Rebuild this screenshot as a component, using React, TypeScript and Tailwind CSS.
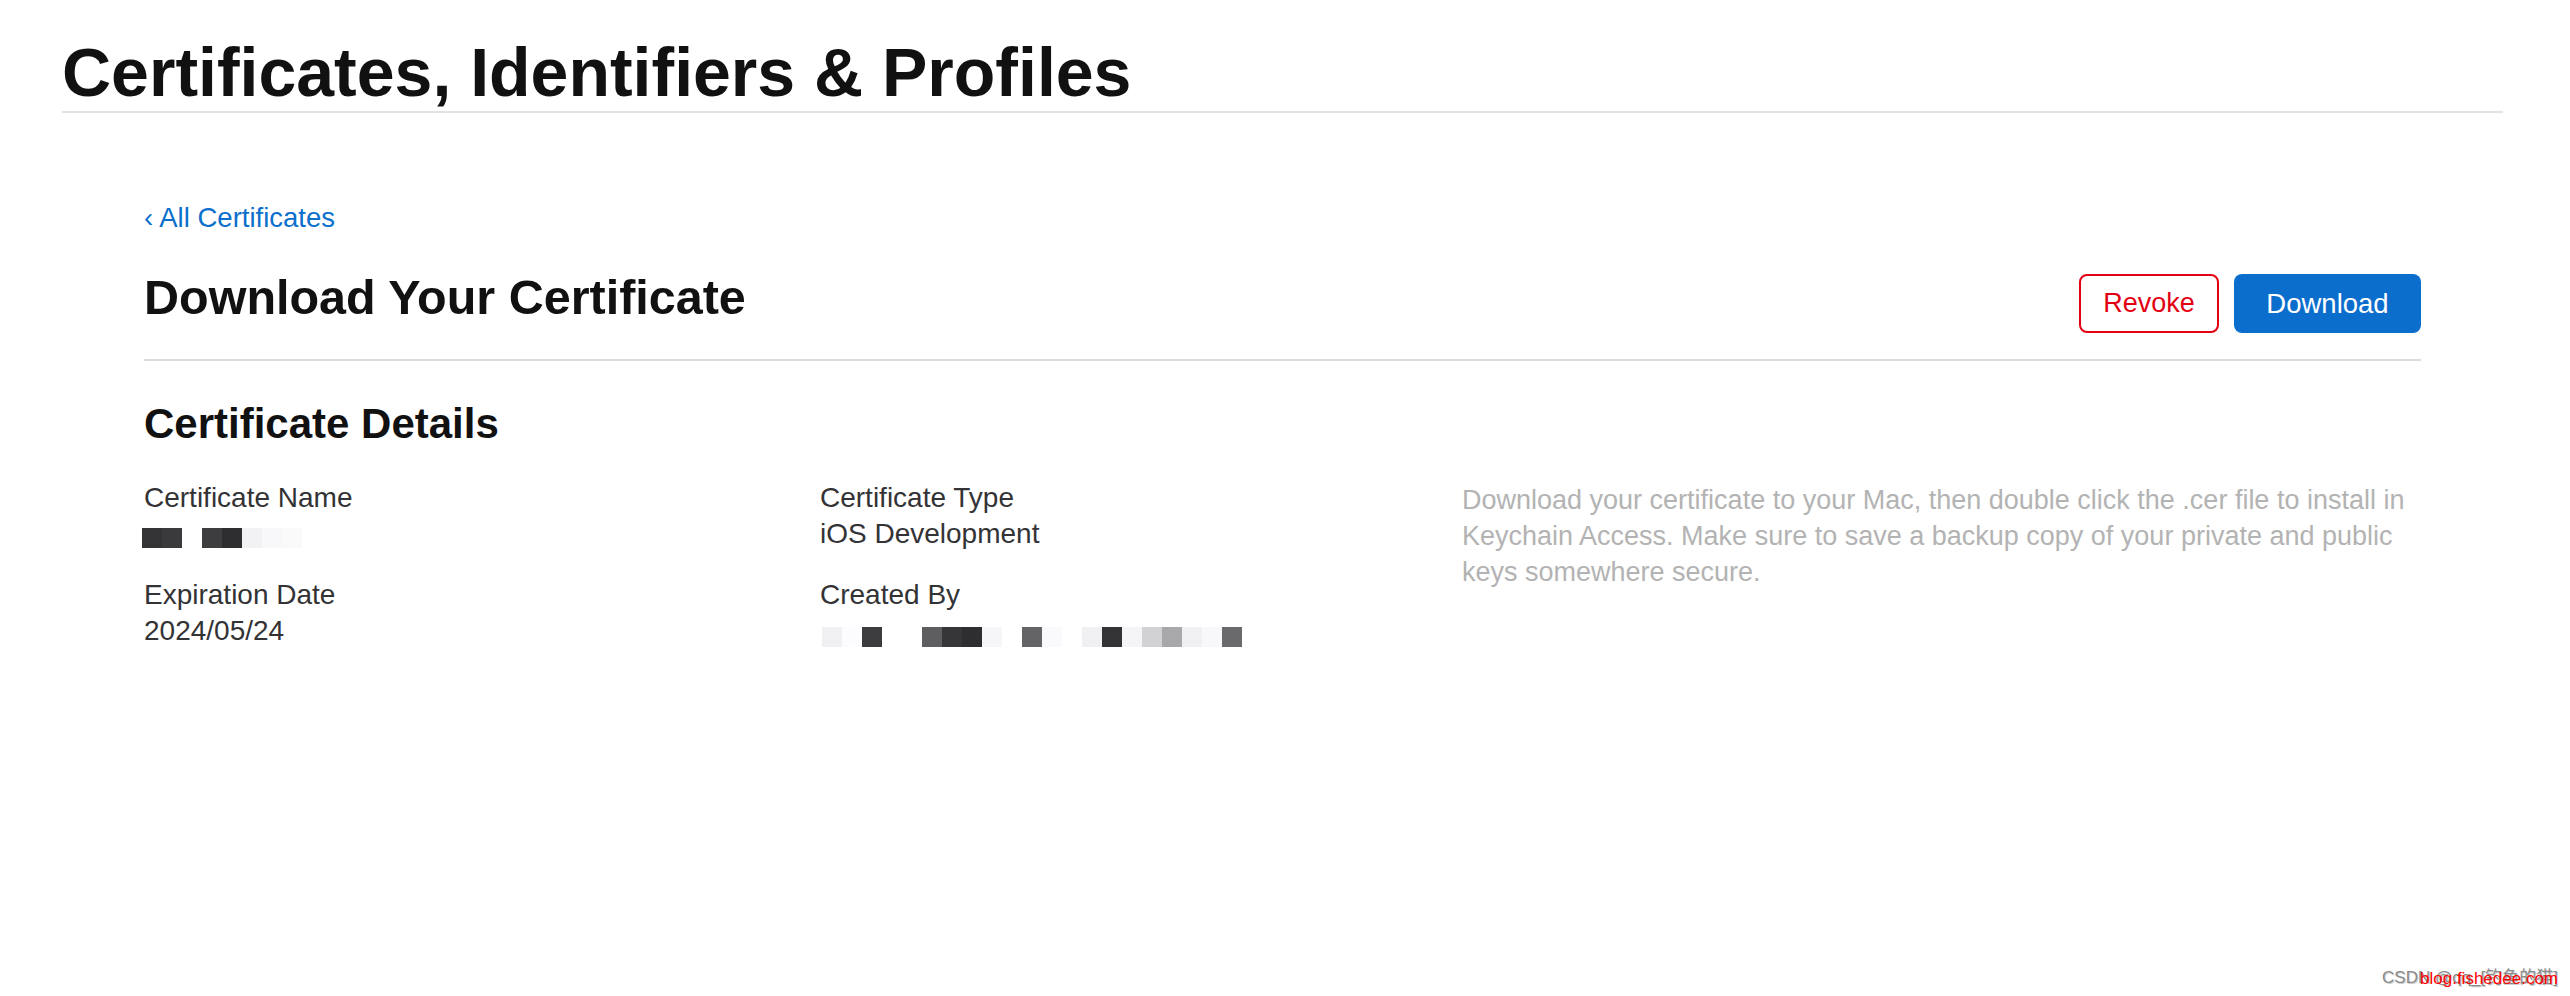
import React from "react";

const nameCells = ["#333335", "#3a3a3c", "transparent", "#3d3d40", "#2e2e30", "#f2f2f4", "#f8f8fa", "#fafafb"];
const createdCells = [
  "#f0f0f2", "#fcfcfe", "#3c3c3e", "transparent", "transparent", "#5e5e60", "#363638", "#2e2e30", "#f6f6f8", "transparent",
  "#646466", "#fafafc", "transparent", "#f0f0f2", "#333335", "#f5f5f7", "#d2d2d4", "#a8a8aa", "#f0f0f2", "#f8f8fa", "#6a6a6c",
];

function Pixels({ cells }: { cells: string[] }) {
  return (
    <div className="flex h-[20px]">
      {cells.map((c, i) => (
        <div key={i} className="w-[20px] h-[20px]" style={{ backgroundColor: c }} />
      ))}
    </div>
  );
}

export default function App() {
  return (
    <div className="relative min-h-[996px] bg-white text-[#111] font-['Liberation_Sans',Arial,sans-serif]">
      <div className="pl-[62px] pr-[67px]">
        <h1 className="pt-[38px] text-[68px] leading-[68px] font-bold text-[#111] whitespace-nowrap">
          Certificates, Identifiers &amp; Profiles
        </h1>
        <div className="mt-[5px] h-[2px] bg-[#e3e3e3]" />

        <div className="px-[82px]">
          <a className="mt-[87px] block text-[27.5px] leading-[36px] text-[#0b6fcc]">‹ All Certificates</a>

          <div className="mt-[33px] flex items-start justify-between">
            <h2 className="text-[48.5px] leading-[56px] font-bold text-[#111]">Download Your Certificate</h2>
            <div className="mt-[5px] flex gap-[15px]">
              <button className="h-[59px] w-[140px] rounded-[8px] border-2 border-[#e30013] bg-white text-[27px] text-[#e30013]">
                Revoke
              </button>
              <button className="h-[59px] w-[187px] rounded-[8px] bg-[#0b6dcc] text-[27.5px] text-white">
                Download
              </button>
            </div>
          </div>
          <div className="mt-[26px] h-[2px] bg-[#dcdcdc]" />

          <h3 className="mt-[38px] text-[42px] leading-[50px] font-bold text-[#111]">Certificate Details</h3>

          <div className="mt-[31px] grid grid-cols-[676px_642px_1fr] text-[28px] leading-[36px] text-[#333336]">
            <div>
              <div>Certificate Name</div>
              <div className="h-[36px] pt-[12px] -ml-[2px]">
                <Pixels cells={nameCells} />
              </div>
              <div className="mt-[25px]">Expiration Date</div>
              <div>2024/05/24</div>
            </div>
            <div>
              <div>Certificate Type</div>
              <div>iOS Development</div>
              <div className="mt-[25px]">Created By</div>
              <div className="h-[36px] pt-[14px] ml-[2px]">
                <Pixels cells={createdCells} />
              </div>
            </div>
            <div className="pt-[2px] text-[27px] leading-[36px] text-[#b3b3b3] whitespace-nowrap">
              Download your certificate to your Mac, then double click the .cer file to install in
              <br />
              Keychain Access. Make sure to save a backup copy of your private and public
              <br />
              keys somewhere secure.
            </div>
          </div>
        </div>
      </div>

      <div className="absolute right-[12px] bottom-[8px] flex items-center whitespace-nowrap text-[17px] leading-[20px]">
        <span className="text-[#8a8a8a] [text-shadow:1px_1px_0_#d0d0d0] font-['Liberation_Sans','Noto_Sans_CJK_SC',sans-serif]">
          CSDN @qq_[钓鱼的猫]
        </span>
        <span className="absolute right-0 top-[1px] text-[17px] text-[#ff0000]">blog.fishedee.com</span>
      </div>
    </div>
  );
}
